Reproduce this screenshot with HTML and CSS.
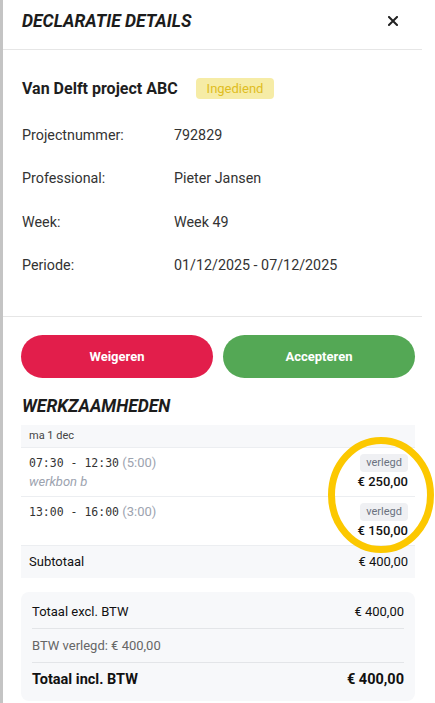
FILE: index.html
```html
<!DOCTYPE html>
<html lang="nl">
<head>
    <meta charset="UTF-8">
    <meta name="viewport" content="width=device-width, initial-scale=1.0">
    <title>Declaratie details</title>
    <link rel="stylesheet" href="styles.css">
</head>
<body>
    <div class="page">
        <div class="backdrop-edge"></div>

        <div class="drawer">
            <div class="drawer-header">
                <h2>Declaratie details</h2>
                <button class="close-btn" aria-label="Sluiten">
                    <svg width="10" height="10" viewBox="0 0 10 10">
                        <path d="M1 1 L9 9 M9 1 L1 9" stroke="#222" stroke-width="2" stroke-linecap="square"/>
                    </svg>
                </button>
            </div>

            <div class="project-info">
                <div class="project-title">
                    <span>Van Delft project ABC</span>
                    <span class="status">Ingediend</span>
                </div>
                <div class="info-row">
                    <span class="label">Projectnummer:</span>
                    <span>792829</span>
                </div>
                <div class="info-row">
                    <span class="label">Professional:</span>
                    <span>Pieter Jansen</span>
                </div>
                <div class="info-row">
                    <span class="label">Week:</span>
                    <span>Week 49</span>
                </div>
                <div class="info-row">
                    <span class="label">Periode:</span>
                    <span>01/12/2025 - 07/12/2025</span>
                </div>
            </div>

            <div class="drawer-body">
                <div class="actions">
                    <button class="btn btn-reject">Weigeren</button>
                    <button class="btn btn-accept">Accepteren</button>
                </div>

                <h3>Werkzaamheden</h3>

                <div class="work-table">
                    <div class="day-header">ma 1 dec</div>
                    <div class="work-row">
                        <div class="work-left">
                            <div class="time"><code>07:30 - 12:30</code> <span class="duration">(5:00)</span></div>
                            <div class="note">werkbon b</div>
                        </div>
                        <div class="work-right">
                            <span class="tag">verlegd</span>
                            <div class="amount">€ 250,00</div>
                        </div>
                    </div>
                    <div class="work-row">
                        <div class="work-left">
                            <div class="time"><code>13:00 - 16:00</code> <span class="duration">(3:00)</span></div>
                        </div>
                        <div class="work-right">
                            <span class="tag">verlegd</span>
                            <div class="amount">€ 150,00</div>
                        </div>
                    </div>
                    <div class="subtotal">
                        <span>Subtotaal</span>
                        <span>€ 400,00</span>
                    </div>
                </div>

                <div class="totals">
                    <div class="total-row">
                        <span>Totaal excl. BTW</span>
                        <span>€ 400,00</span>
                    </div>
                    <div class="total-row muted">
                        <span>BTW verlegd: € 400,00</span>
                    </div>
                    <div class="total-row grand">
                        <span>Totaal incl. BTW</span>
                        <span>€ 400,00</span>
                    </div>
                </div>
            </div>
        </div>

        <!-- markering rond de verlegd bedragen -->
        <svg class="highlight" width="110" height="124" viewBox="0 0 110 124">
            <ellipse cx="55" cy="62" rx="49.5" ry="54.5" fill="none" stroke="#fcc800" stroke-width="7"/>
        </svg>
    </div>
</body>
</html>
```

FILE: styles.css
```css
body {
    font-family: Roboto, "Liberation Sans", Arial, sans-serif;
    margin: 0;
    padding: 0;
    background: #fff;
    color: #222;
    overflow: hidden;
}
.page {
    position: relative;
    display: flex;
    height: 703px;
}
.backdrop-edge {
    width: 3px;
    flex-shrink: 0;
    background: #c4c4c4;
}
.drawer {
    width: 419px;
    flex-shrink: 0;
    background: #fff;
}
.drawer-header {
    display: flex;
    justify-content: space-between;
    align-items: flex-start;
    padding: 10px 24px 17px 19px;
    border-bottom: 1px solid #e6e6e6;
}
.drawer-header h2 {
    margin: 0;
    font-size: 17.5px;
    line-height: 22px;
    font-weight: 700;
    font-style: italic;
    text-transform: uppercase;
    color: #1c1c1c;
}
.close-btn {
    border: none;
    background: none;
    padding: 0;
    margin-top: 6px;
    width: 10px;
    height: 10px;
    cursor: pointer;
}
.close-btn svg {
    display: block;
}
.project-info {
    padding: 28px 7px 29px 19px;
    border-bottom: 1px solid #e6e6e6;
}
.project-title {
    display: flex;
    align-items: center;
    gap: 18px;
    font-size: 16px;
    font-weight: 700;
    color: #1e1e1e;
    margin-bottom: 14px;
}
.status {
    font-size: 13px;
    font-weight: 400;
    line-height: 21px;
    padding: 0 11px;
    border-radius: 4px;
    background: #f6eca6;
    color: #dfbd22;
}
.info-row {
    display: flex;
    align-items: center;
    height: 43.5px;
    font-size: 14.3px;
    color: #333;
}
.info-row .label {
    width: 152px;
}
.drawer-body {
    padding: 18px 7px 0 18px;
}
.actions {
    display: flex;
    gap: 10px;
}
.btn {
    flex: 1;
    height: 43px;
    border: none;
    border-radius: 22px;
    color: white;
    font-family: Roboto, "Liberation Sans", Arial, sans-serif;
    font-size: 13px;
    font-weight: 700;
    cursor: pointer;
}
.btn-reject {
    background: #e21e4b;
}
.btn-accept {
    background: #54a855;
}
.drawer-body h3 {
    margin: 17px 0 8px 1px;
    font-size: 17.5px;
    line-height: 22px;
    font-weight: 700;
    font-style: italic;
    text-transform: uppercase;
    color: #1c1c1c;
}
.work-table {
    font-size: 13px;
}
.day-header {
    background: #f7f8fa;
    padding: 0 8px;
    line-height: 22px;
    font-size: 11px;
    color: #444;
}
.work-row {
    display: flex;
    justify-content: space-between;
    border-top: 1px solid #eceef1;
    padding: 6px 7px 5px 8px;
}
.work-left .time {
    line-height: 18px;
    color: #9ca3af;
}
.work-left code {
    font-family: "DejaVu Sans Mono", "Liberation Mono", monospace;
    font-size: 11.5px;
    color: #333;
}
.work-left .note {
    line-height: 19px;
    font-style: italic;
    color: #9ca3af;
}
.work-right {
    display: flex;
    flex-direction: column;
    align-items: flex-end;
}
.tag {
    display: inline-block;
    height: 18px;
    line-height: 18px;
    padding: 0 6px;
    border-radius: 4px;
    background: #eff0f3;
    color: #6b7280;
    font-size: 11px;
}
.amount {
    line-height: 19px;
    font-weight: 500;
    color: #111;
}
.subtotal {
    display: flex;
    justify-content: space-between;
    border-top: 1px solid #eceef1;
    background: #f7f8fa;
    padding: 0 7px 0 8px;
    line-height: 32px;
    color: #111;
}
.totals {
    margin-top: 14px;
    background: #f7f8fa;
    border-radius: 8px;
    padding: 3px 11px 5px;
    font-size: 13px;
}
.total-row {
    display: flex;
    justify-content: space-between;
    padding: 8px 0;
    line-height: 17px;
    color: #111;
}
.total-row + .total-row {
    border-top: 1px solid #e3e5e8;
}
.total-row.muted {
    color: #666;
}
.total-row.grand {
    font-size: 14.5px;
    font-weight: 700;
    color: #111;
}
.highlight {
    position: absolute;
    left: 326px;
    top: 433px;
}
```
